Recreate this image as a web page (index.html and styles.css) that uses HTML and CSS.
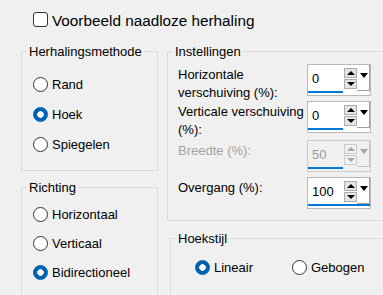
FILE: index.html
```html
<!DOCTYPE html>
<html>
<head>
<meta charset="utf-8">
<link rel="stylesheet" href="styles.css">
</head>
<body>
<div class="top"><span class="check"></span><span class="top-text">Voorbeeld naadloze herhaling</span></div>
<div class="panels">
  <div class="col">
    <fieldset class="grp g-method">
      <legend>Herhalingsmethode</legend>
      <div class="gbody">
        <div class="radio"><span class="dot"></span><span>Rand</span></div>
        <div class="radio on"><span class="dot"></span><span>Hoek</span></div>
        <div class="radio"><span class="dot"></span><span>Spiegelen</span></div>
      </div>
    </fieldset>
    <fieldset class="grp g-dir">
      <legend>Richting</legend>
      <div class="gbody">
        <div class="radio"><span class="dot"></span><span>Horizontaal</span></div>
        <div class="radio"><span class="dot"></span><span>Verticaal</span></div>
        <div class="radio on"><span class="dot"></span><span>Bidirectioneel</span></div>
      </div>
    </fieldset>
  </div>
  <div class="col">
    <fieldset class="grp g-set">
      <legend>Instellingen</legend>
      <div class="gbody">
        <div class="row r1">
          <div class="lbl">Horizontale<br>verschuiving (%):</div>
          <div class="spin"><div class="srow"><div class="val">0</div><div class="btns"><span class="btn up"></span><span class="btn down"></span></div><div class="dd"></div></div><div class="uline"></div></div>
        </div>
        <div class="row r2">
          <div class="lbl">Verticale verschuiving<br>(%):</div>
          <div class="spin"><div class="srow"><div class="val">0</div><div class="btns"><span class="btn up"></span><span class="btn down"></span></div><div class="dd"></div></div><div class="uline"></div></div>
        </div>
        <div class="row r3">
          <div class="lbl dis-text">Breedte (%):</div>
          <div class="spin dis"><div class="srow"><div class="val">50</div><div class="btns"><span class="btn up"></span><span class="btn down"></span></div><div class="dd"></div></div><div class="uline"></div></div>
        </div>
        <div class="row r4">
          <div class="lbl">Overgang (%):</div>
          <div class="spin focus"><div class="srow"><div class="val">100</div><div class="btns"><span class="btn up"></span><span class="btn down"></span></div><div class="dd"></div></div><div class="uline"></div></div>
        </div>
      </div>
    </fieldset>
    <fieldset class="grp g-corner">
      <legend>Hoekstijl</legend>
      <div class="gbody hrow">
        <div class="radio on first"><span class="dot"></span><span>Lineair</span></div>
        <div class="radio"><span class="dot"></span><span>Gebogen</span></div>
      </div>
    </fieldset>
  </div>
</div>
</body>
</html>
```

FILE: styles.css
```css
* { box-sizing: border-box; }
html, body { margin: 0; padding: 0; }
body {
  width: 383px;
  height: 295px;
  overflow: hidden;
  background: #f0f0f0;
  font-family: "Liberation Sans", Arial, sans-serif;
  font-size: 13px;
  color: #000;
}

.top {
  height: 42px;
  display: flex;
  align-items: flex-start;
  padding-left: 33px;
  font-size: 15.3px;
  line-height: 18px;
}
.check {
  flex: none;
  width: 15px;
  height: 15px;
  margin-top: 12px;
  border: 1px solid #333;
  border-radius: 3px;
  background: #fff;
}
.top-text { margin-top: 12px; margin-left: 4px; }

.panels {
  width: 383px;
  height: 253px;
  overflow: hidden;
  display: grid;
  grid-template-columns: 137px 1fr;
  column-gap: 9px;
  padding-left: 21px;
  align-items: start;
}
.col { display: flex; flex-direction: column; min-width: 0; }

.grp {
  margin: 0;
  padding: 0;
  border: 1px solid #dcdcdc;
  min-width: 0;
}
.g-set, .g-corner { border-right: none; }
.grp legend {
  margin-left: 5px;
  padding: 0 2px;
  line-height: 19px;
}

.radio {
  display: flex;
  align-items: center;
  gap: 4px;
  height: 30px;
}
.dot {
  flex: none;
  width: 15px;
  height: 15px;
  border-radius: 50%;
  border: 1px solid #333;
  background: #fff;
}
.radio.on .dot {
  border-color: #0063b1;
  background: radial-gradient(circle, #fff 0 3px, #0063b1 3.6px);
}

.g-method .gbody { padding: 8px 0 11px 11px; }
.g-dir { margin-top: 7px; }
.g-dir .gbody { padding: 2.5px 0 12px 11px; }
.g-dir .radio { height: 29px; }

.g-set .gbody { padding: 3px 0 11px 10px; }
.row { display: flex; align-items: flex-start; }
.r1 { height: 37px; }
.r2 { height: 39px; }
.r3 { height: 37px; }
.r4 { height: 32px; }
.lbl {
  width: 129px;
  flex: none;
  padding-top: 2px;
  line-height: 17.5px;
}
.dis-text { color: #a3a3a3; }

.spin {
  flex: none;
  width: 64px;
  height: 32px;
  border: 1px solid #b9b9b9;
  background: #fff;
  display: flex;
  flex-direction: column;
}
.srow { display: flex; height: 26px; }
.val {
  width: 35px;
  height: 26px;
  padding: 6px 0 0 4px;
  line-height: 15px;
}
.uline { height: 2px; width: 35px; background: #0078d7; }
.spin.focus .uline { width: auto; }
.btns {
  width: 13px;
  margin: 3px 0 0 1px;
  display: flex;
  flex-direction: column;
  gap: 1px;
}
.btn {
  height: 10px;
  border: 1px solid #adadad;
  background: #e5e5e5;
  display: flex;
  align-items: center;
  justify-content: center;
}
.btn.up::before {
  content: "";
  border-left: 4px solid transparent;
  border-right: 4px solid transparent;
  border-bottom: 4px solid #000;
}
.btn.down::before {
  content: "";
  border-left: 4px solid transparent;
  border-right: 4px solid transparent;
  border-top: 4px solid #000;
}
.dd {
  width: 13px;
  height: 26px;
  border-right: 1px solid #a0a0a0;
  border-bottom: 1px solid #a0a0a0;
  display: flex;
  padding: 8px 0 0 3px;
}
.dd::before {
  content: "";
  height: 0;
  border-left: 4px solid transparent;
  border-right: 4px solid transparent;
  border-top: 5px solid #000;
}

.spin.dis { background: #f0f0f0; border-color: #cccccc; color: #9b9b9b; }
.spin.dis .btn { background: #f0f0f0; border-color: #cccccc; }
.spin.dis .btn.up::before { border-bottom-color: #a6a6a6; }
.spin.dis .btn.down::before { border-top-color: #a6a6a6; }
.spin.dis .dd::before { border-top-color: #a6a6a6; }
.spin.dis .dd { border-color: #c4c4c4; }

.g-corner { margin-top: 8px; margin-left: 3px; }
.hrow { display: flex; padding: 4px 0 20px 24px; }
.radio.first { width: 97px; }
```
